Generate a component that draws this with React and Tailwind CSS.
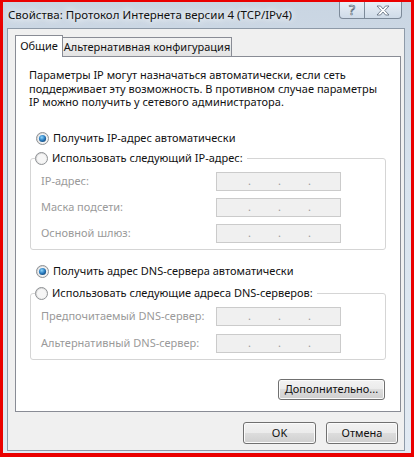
import React from 'react';

const uiFont = "font-['Noto_Sans',_'DejaVu_Sans',_sans-serif]";

function Radio({ checked }) {
  return (
    <svg width="13" height="13" viewBox="0 0 13 13" className="shrink-0">
      <defs>
        <linearGradient id="radio-face" x1="0" y1="0" x2="1" y2="1">
          <stop offset="0" stopColor="#cfcfcf" />
          <stop offset="1" stopColor="#fbfbfb" />
        </linearGradient>
        <radialGradient id="radio-dot" cx="0.4" cy="0.35" r="0.75">
          <stop offset="0" stopColor="#8fd6fb" />
          <stop offset="0.55" stopColor="#2a7cc0" />
          <stop offset="1" stopColor="#133f6a" />
        </radialGradient>
      </defs>
      <circle cx="6.5" cy="6.5" r="6" fill="url(#radio-face)" stroke="#8f9295" />
      <circle cx="6.5" cy="6.5" r="4.5" fill="#f6f6f6" />
      {checked && <circle cx="6.5" cy="6.5" r="3.6" fill="url(#radio-dot)" />}
    </svg>
  );
}

function RadioRow({ checked, children }) {
  return (
    <div className="flex h-[16px] items-center gap-[4px] whitespace-nowrap">
      <Radio checked={checked} />
      <span className="text-[#111]">{children}</span>
    </div>
  );
}

function IpField() {
  return (
    <div className="flex h-[19px] w-[125px] items-center gap-[27px] border border-[#cbcbcb] bg-[#f0f0f0] pl-[31px] text-[#9a9a9a]">
      <span>.</span>
      <span>.</span>
      <span>.</span>
    </div>
  );
}

function FieldRow({ label }) {
  return (
    <div className="flex items-center whitespace-nowrap">
      <span className="w-[185px] pl-[10px] text-[#9a9a9a]">{label}</span>
      <IpField />
    </div>
  );
}

function Group({ legend, rows, gap }) {
  return (
    <fieldset className="ml-[14px] w-[356px] rounded-[3px] border border-[#d5d5d5] pb-[6px]">
      <legend className="ml-[4px] pr-[4px]">
        <RadioRow>{legend}</RadioRow>
      </legend>
      <div className={`mt-[5px] flex flex-col ${gap}`}>
        {rows.map((r) => (
          <FieldRow key={r} label={r} />
        ))}
      </div>
    </fieldset>
  );
}

function WinButton({ children, className }) {
  return (
    <button
      className={`flex items-center justify-center whitespace-nowrap rounded-[3px] border border-[#707070] bg-[linear-gradient(#f2f2f2_0%,#ebebeb_50%,#dddddd_50%,#cfcfcf_100%)] text-[#111] shadow-[inset_0_0_0_1px_#fbfbfb] ${className}`}
    >
      {children}
    </button>
  );
}

export default function App() {
  return (
    <div className={`h-[457px] w-[414px] bg-[#ea0000] pb-[4px] pl-[3px] pr-[3px] pt-[2px] text-[11px] ${uiFont}`}>
      <div className="flex h-full flex-col bg-[linear-gradient(180deg,#c9d5e2_0%,#d8e3ee_40%,#e2eaf3_100%)]">
        {/* title bar */}
        <div className="flex h-[26px] items-start justify-between">
          <span className="ml-[5px] mt-[4px] whitespace-nowrap text-[11.5px] text-[#111] [text-shadow:0_0_6px_#fff,0_0_10px_#fff]">
            Свойства: Протокол Интернета версии 4 (TCP/IPv4)
          </span>
          <div className="mr-[9px] flex h-[17px]">
            <div className="flex w-[26px] items-center justify-center rounded-bl-[4px] border border-t-0 border-[#7d8a99] bg-[linear-gradient(#e9eff6,#cfdbe8)] text-[14px] leading-none text-white [-webkit-text-stroke:0.7px_#5a6878]">
              ?
            </div>
            <div className="flex w-[37px] items-center justify-center rounded-br-[4px] border border-l-0 border-t-0 border-[#7d8a99] bg-[linear-gradient(#e9eff6,#cfdbe8)]">
              <svg width="14" height="11" viewBox="0 0 14 11">
                <path
                  d="M1 1h3.5L7 4 9.5 1H13L8.8 5.5 13 10H9.5L7 7 4.5 10H1l4.2-4.5z"
                  fill="#fff"
                  stroke="#5a6878"
                  strokeWidth="0.8"
                />
              </svg>
            </div>
          </div>
        </div>

        {/* client area */}
        <div className="mb-[2px] ml-[4px] mr-[6px] flex flex-1 flex-col border border-[#8e9aa8] bg-[#f0f0f0] pl-[7px] pt-[6px]">
          <div className="flex items-end whitespace-nowrap">
            <div className="relative z-10 -mb-px flex h-[22px] w-[48px] items-center justify-center border border-b-0 border-[#898c95] bg-white text-[#111]">
              Общие
            </div>
            <div className="-ml-px flex h-[19px] w-[170px] items-center justify-center border border-b-0 border-[#898c95] bg-[linear-gradient(#f3f3f3,#e3e3e3)] text-[#111]">
              Альтернативная конфигурация
            </div>
          </div>

          <div className="flex h-[356px] w-[386px] flex-col border border-[#898c95] bg-white pt-[11px]">
            <p className="whitespace-nowrap pl-[13px] leading-[13.5px] text-[#111]">
              Параметры IP могут назначаться автоматически, если сеть
              <br />
              поддерживает эту возможность. В противном случае параметры
              <br />
              IP можно получить у сетевого администратора.
            </p>

            <div className="ml-[20px] mt-[22px]">
              <RadioRow checked>Получить IP-адрес автоматически</RadioRow>
            </div>
            <div className="mt-[4px]">
              <Group
                legend="Использовать следующий IP-адрес:"
                rows={['IP-адрес:', 'Маска подсети:', 'Основной шлюз:']}
                gap="gap-[7px]"
              />
            </div>

            <div className="ml-[20px] mt-[14px]">
              <RadioRow checked>Получить адрес DNS-сервера автоматически</RadioRow>
            </div>
            <div className="mt-[6px]">
              <Group
                legend="Использовать следующие адреса DNS-серверов:"
                rows={['Предпочитаемый DNS-сервер:', 'Альтернативный DNS-сервер:']}
                gap="gap-[8px]"
              />
            </div>

            <div className="mt-[19px] flex justify-end pr-[15px]">
              <WinButton className="h-[21px] w-[107px]">Дополнительно...</WinButton>
            </div>
          </div>

          <div className="mt-[10px] flex justify-end gap-[10px] pr-[6px]">
            <WinButton className="h-[22px] w-[73px]">OK</WinButton>
            <WinButton className="h-[22px] w-[72px]">Отмена</WinButton>
          </div>
        </div>
      </div>
    </div>
  );
}
